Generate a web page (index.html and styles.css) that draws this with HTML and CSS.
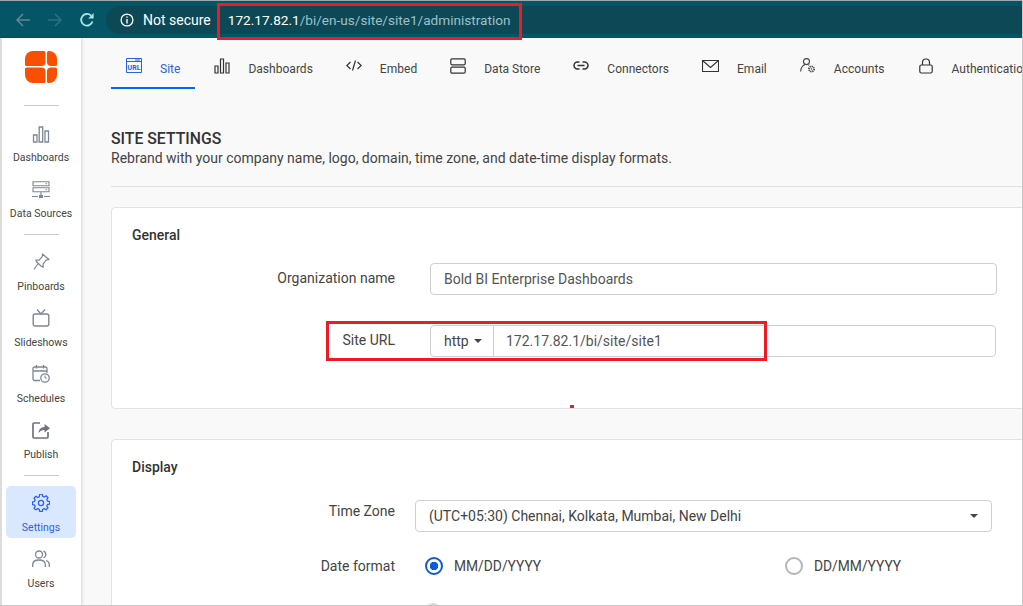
FILE: index.html
```html
<!DOCTYPE html>
<html lang="en">
<head>
  <meta charset="UTF-8">
  <title>Site Settings</title>
  <link rel="stylesheet" href="styles.css">
</head>
<body>
  <!-- Browser toolbar -->
  <div class="browser-bar">
    <svg class="nav-icon" viewBox="0 0 16 16"><path d="M15 8H2M8 2 2 8l6 6" fill="none" stroke="#5f8590" stroke-width="1.6"/></svg>
    <svg class="nav-icon" viewBox="0 0 16 16"><path d="M1 8h13M8 2l6 6-6 6" fill="none" stroke="#2f6f7e" stroke-width="1.6"/></svg>
    <svg class="nav-icon" viewBox="0 0 16 16"><path d="M13.5 9.5A5.8 5.8 0 1 1 12 3.6" fill="none" stroke="#a8e6e4" stroke-width="1.8"/><path d="M14.6 1v5.4H9.2z" fill="#a8e6e4"/></svg>
    <div class="omnibox">
      <svg class="info-icon" viewBox="0 0 14 14"><circle cx="7" cy="7" r="5.9" fill="none" stroke="#fff" stroke-width="1.3"/><path d="M6.3 3.4h1.4v1.4H6.3zM6.3 6h1.4v4.6H6.3z" fill="#fff"/></svg>
      <span class="not-secure">Not secure</span>
      <span class="url-host">172.17.82.1</span><span class="url-path">/bi/en-us/site/site1/administration</span>
    </div>
  </div>

  <div class="app">
    <!-- Left navigation -->
    <nav class="sidebar">
      <svg class="logo" viewBox="0 0 32 32">
        <path d="M8 0h11a1.500 1.500 0 0 1 1.500 1.500V11a4 4 0 0 1-4 4H1.500A1.500 1.500 0 0 1 0 13.500V8a8 8 0 0 1 8-8z" fill="#f94f00"/>
        <path d="M22 1.500A1.500 1.500 0 0 1 23.500 0H24a8 8 0 0 1 8 8v5.500a1.500 1.500 0 0 1-1.500 1.500H26a4 4 0 0 1-4-4z" fill="#f94f00"/>
        <path d="M1.500 16.500h15a4 4 0 0 1 4 4v10a1.500 1.500 0 0 1-1.500 1.500H8a8 8 0 0 1-8-8v-6a1.500 1.500 0 0 1 1.500-1.500z" fill="#f94f00"/>
        <path d="M26 16.500h4.500A1.500 1.500 0 0 1 32 18v6a8 8 0 0 1-8 8h-.5a1.500 1.500 0 0 1-1.500-1.500v-10a4 4 0 0 1 4-4z" fill="#f94f00"/>
      </svg>
      <hr class="side-rule side-rule-first">
      <a class="side-item">
        <svg class="side-icon" viewBox="0 0 18 18"><path d="M1.500 10h3.500v7H1.500zM7.200 2h3.500v15H7.200zM13 6h3.500v11H13z" fill="none" stroke="#7d8794" stroke-width="1.300"/></svg>
        <span>Dashboards</span>
      </a>
      <a class="side-item">
        <svg class="side-icon" viewBox="0 0 18 18"><path d="M1 0.700h16v4H1zM1 6.700h16v4H1zM9 10.700v4.500M0 15.500h6M12 15.500h6" fill="none" stroke="#7d8794" stroke-width="1.100"/><path d="M7 14h4v3H7z" fill="#7d8794"/><path d="M13.500 2.700h1.500M13.500 8.700h1.500" stroke="#7d8794"/></svg>
        <span>Data Sources</span>
      </a>
      <hr class="side-rule side-rule-mid">
      <a class="side-item">
        <svg class="side-icon side-icon-up" viewBox="0 0 18 18"><path d="M10.500 1 17 6.500l-2.800.6-3.200 4 .2 3.200-2-1L4.600 8.800 3.800 7l3.400.2 3-3.500zM5.800 11 2 16.500" fill="none" stroke="#7d8794" stroke-width="1.200" stroke-linejoin="round"/></svg>
        <span>Pinboards</span>
      </a>
      <a class="side-item">
        <svg class="side-icon side-icon-up" viewBox="0 0 18 18"><rect x="1.200" y="5" width="15.600" height="12" rx="2" fill="none" stroke="#7d8794" stroke-width="1.400"/><path d="M5 0.500 9 5l4-4.500" fill="none" stroke="#7d8794" stroke-width="1.300"/></svg>
        <span>Slideshows</span>
      </a>
      <a class="side-item">
        <svg class="side-icon side-icon-up" viewBox="0 0 18 18"><path d="M8 15.500H2.500a1.500 1.500 0 0 1-1.500-1.500V3.500A1.500 1.500 0 0 1 2.500 2h11A1.500 1.500 0 0 1 15 3.500V8M1 6h14M4.500 0v3.500M11.500 0v3.500" fill="none" stroke="#7d8794" stroke-width="1.300"/><circle cx="13" cy="13" r="4.200" fill="none" stroke="#7d8794" stroke-width="1.300"/><path d="M13 10.500V13h1.800" fill="none" stroke="#7d8794"/></svg>
        <span>Schedules</span>
      </a>
      <a class="side-item">
        <svg class="side-icon side-icon-up" viewBox="0 0 18 18"><path d="M8 2H2a1 1 0 0 0-1 1v13a1 1 0 0 0 1 1h13a1 1 0 0 0 1-1v-5" fill="none" stroke="#6f7680" stroke-width="1.700"/><path d="M6.500 12c.3-3.500 2.500-5.800 6-6V3L18 7.200l-5.500 4.300V9c-2.500 0-4.500 1-6 3z" fill="#6f7680"/></svg>
        <span>Publish</span>
      </a>
      <hr class="side-rule side-rule-last">
      <a class="side-item active">
        <svg class="side-icon" viewBox="0 0 18 18"><path d="M7.700.7h2.600l.4 2.100 1.600.7 1.800-1.200 1.900 1.900-1.200 1.800.7 1.600 2.100.4v2.600l-2.100.4-.7 1.600 1.200 1.800-1.900 1.900-1.800-1.200-1.600.7-.4 2.100H7.700l-.4-2.100-1.600-.7-1.800 1.200L2 14.900l1.200-1.800-.7-1.600-2.100-.4V8.500l2.100-.4.7-1.600L2 4.700l1.900-1.900 1.800 1.200 1.600-.7z" transform="translate(0 -.5)" fill="none" stroke="#2f5ff5" stroke-width="1.300" stroke-linejoin="round"/><circle cx="9" cy="9" r="2.600" fill="none" stroke="#2f5ff5" stroke-width="1.300"/></svg>
        <span>Settings</span>
      </a>
      <a class="side-item">
        <svg class="side-icon" viewBox="0 0 18 18"><circle cx="7" cy="4.500" r="3.500" fill="none" stroke="#7d8794" stroke-width="1.300"/><path d="M.7 17v-2.500c0-3 2.300-4.500 6.300-4.500s6.300 1.500 6.300 4.500V17M11.500 1.200a3.500 3.500 0 0 1 0 6.600M14 10.500c2 .6 3.300 2 3.300 4V17" fill="none" stroke="#7d8794" stroke-width="1.300"/></svg>
        <span>Users</span>
      </a>
    </nav>

    <main class="content">
      <!-- Settings tabs -->
      <div class="tabs">
        <a class="tab active">
          <svg class="tab-icon" viewBox="0 0 16 16"><path d="M.5.500h15v14H.5zM.5 3.500h15" fill="none" stroke="#2563eb"/><path d="M9 2h5" stroke="#2563eb"/><text x="8" y="12" class="tab-icon-text">URL</text></svg>
          <span>Site</span>
        </a>
        <a class="tab">
          <svg class="tab-icon" viewBox="0 0 16 16"><path d="M1 8h3v7H1zM6.500 1h3v14h-3zM12 5h3v10h-3z" fill="none" stroke="#333" stroke-width="1.200"/></svg>
          <span>Dashboards</span>
        </a>
        <a class="tab">
          <svg class="tab-icon" viewBox="0 0 16 16"><path d="M4.500 4 .8 7.500l3.700 3.500M11.500 4l3.700 3.500-3.700 3.500M9.500 2.500 6.500 12.500" fill="none" stroke="#333" stroke-width="1.200"/></svg>
          <span>Embed</span>
        </a>
        <a class="tab">
          <svg class="tab-icon" viewBox="0 0 16 16"><rect x=".8" y="0.800" width="14.400" height="6" rx="1.200" fill="none" stroke="#333" stroke-width="1.200"/><rect x=".8" y="9.200" width="14.400" height="6" rx="1.200" fill="none" stroke="#333" stroke-width="1.200"/></svg>
          <span>Data Store</span>
        </a>
        <a class="tab">
          <svg class="tab-icon" viewBox="0 0 16 16"><path d="M6.500 4H4.500a3.500 3.500 0 0 0 0 7h2M9.500 4h2a3.500 3.500 0 0 1 0 7h-2M4.500 7.500h7" fill="none" stroke="#333" stroke-width="1.500"/></svg>
          <span>Connectors</span>
        </a>
        <a class="tab">
          <svg class="tab-icon tab-icon-wide" viewBox="0 0 17 14"><path d="M.5 1.500h16v11H.5zM.5 1.500l8 7 8-7" fill="none" stroke="#333" stroke-width="1.100"/></svg>
          <span>Email</span>
        </a>
        <a class="tab">
          <svg class="tab-icon" viewBox="0 0 16 16"><circle cx="6.500" cy="3.600" r="3" fill="none" stroke="#444" stroke-width="1.100"/><path d="M.6 13.500c.4-3.700 1.800-5.900 4.400-6.900M8.300 6.700l1 .6" fill="none" stroke="#444" stroke-width="1.100"/><circle cx="11.500" cy="11" r="2.600" fill="none" stroke="#444" stroke-width="1.700" stroke-dasharray="1.300 .7"/><circle cx="11.500" cy="11" r=".8" fill="#444"/></svg>
          <span>Accounts</span>
        </a>
        <a class="tab">
          <svg class="tab-icon" viewBox="0 0 16 16"><rect x="1.800" y="7" width="12.400" height="8" rx="1.500" fill="none" stroke="#333" stroke-width="1.200"/><path d="M4.500 7V4.500a3.500 3.500 0 0 1 7 0V7" fill="none" stroke="#333" stroke-width="1.200"/></svg>
          <span>Authentication</span>
        </a>
      </div>

      <div class="page-head">
        <h1>SITE SETTINGS</h1>
        <p>Rebrand with your company name, logo, domain, time zone, and date-time display formats.</p>
      </div>

      <section class="card card-general">
        <h2>General</h2>
        <div class="form-row">
          <label>Organization name</label>
          <div class="field field-text">Bold BI Enterprise Dashboards</div>
        </div>
        <div class="form-row form-row-url">
          <label>Site URL</label>
          <div class="field field-url">
            <div class="protocol">http<i class="caret"></i></div>
            <div class="url-value">172.17.82.1/bi/site/site1</div>
          </div>
        </div>
      </section>

      <section class="card card-display">
        <h2>Display</h2>
        <div class="form-row form-row-zone">
          <label>Time Zone</label>
          <div class="field field-select">(UTC+05:30) Chennai, Kolkata, Mumbai, New Delhi<i class="caret"></i></div>
        </div>
        <div class="form-row form-row-date">
          <label>Date format</label>
          <div class="radio-group">
            <div class="radio-option"><i class="radio checked"></i>MM/DD/YYYY</div>
            <div class="radio-option"><i class="radio"></i>DD/MM/YYYY</div>
          </div>
        </div>
        <i class="radio radio-next"></i>
      </section>
    </main>
  </div>

  <!-- Screenshot frame and red annotation marks -->
  <div class="frame"></div>
  <div class="mark mark-address"></div>
  <div class="mark mark-site-url"></div>
  <div class="mark-dot"></div>
</body>
</html>
```

FILE: styles.css
```css
/* Basic styling */
html, body {
  margin: 0;
  height: 606px;
  overflow: hidden;
}
body {
  position: relative;
  width: 1023px;
  font-family: Roboto, "Liberation Sans", sans-serif;
  background-color: #f9f9f9;
  color: #3c3c3c;
}

/* Browser toolbar */
.browser-bar {
  display: flex;
  align-items: center;
  height: 38px;
  padding-left: 15px;
  box-sizing: border-box;
  background-color: #045566;
  border-top: 1px solid #9aa9ad;
}
.nav-icon {
  width: 16px;
  height: 16px;
  margin-right: 16px;
}
.nav-icon:nth-child(3) {
  margin-right: 11px;
}
.omnibox {
  flex: 1;
  display: flex;
  align-items: center;
  height: 28px;
  padding-left: 14px;
  border-radius: 14px 0 0 14px;
  background-color: #0d4856;
  font-size: 14px;
}
.info-icon {
  width: 14px;
  height: 14px;
  margin-right: 9px;
}
.not-secure {
  color: #fff;
  margin-right: 17px;
}
.url-host {
  color: #fff;
  font-size: 13.600px;
}
.url-path {
  color: #9cc0c8;
  font-size: 13.600px;
}

/* App layout */
.app {
  display: flex;
  height: 568px;
}
.sidebar {
  flex: none;
  display: flex;
  flex-direction: column;
  align-items: center;
  width: 81px;
  box-sizing: border-box;
  padding-top: 13px;
  background-color: #fff;
  border-left: 2px solid #dcdcdc;
  box-shadow: 1px 0 3px rgba(0,0,0,0.15);
}
.logo {
  flex: none;
  width: 32px;
  height: 32px;
  margin-right: 1px;
}
.side-rule {
  flex: none;
  width: 35px;
  height: 1px;
  margin: 5px 0 10px;
  border: 0;
  background-color: #c9c9c9;
}
.side-rule-first {
  margin: 22px 0 11px;
}
.side-rule-mid {
  margin: 5px 0 11px;
}
.side-rule-last {
  margin: 5px 0 10px;
}
.side-item {
  flex: none;
  display: flex;
  flex-direction: column;
  align-items: center;
  width: 70px;
  height: 52px;
  box-sizing: border-box;
  margin-bottom: 4px;
  margin-right: 1px;
  padding-top: 8px;
  border-radius: 5px;
  font-size: 10.500px;
  color: #444;
}
.side-item span {
  margin-top: 8px;
  white-space: nowrap;
}
.side-rule-last ~ .side-item span {
  margin-top: 9px;
}
.side-item.active {
  background-color: #d9e8ff;
  color: #2f5ff5;
}
.side-icon {
  flex: none;
  width: 18px;
  height: 18px;
}
.side-icon-up {
  margin-top: -1px;
  margin-bottom: 1px;
}

/* Main content */
.content {
  flex: 1;
  min-width: 0;
  padding-left: 30px;
  overflow: hidden;
}
.tabs {
  display: flex;
  height: 51px;
  white-space: nowrap;
}
.tab {
  flex: none;
  display: flex;
  align-items: flex-start;
  box-sizing: border-box;
  height: 51px;
  margin-right: 4px;
  padding: 0 14px 0 15px;
  font-size: 12px;
  letter-spacing: 0.02px;
  color: #444;
}
.tab span {
  margin-top: 24px;
  margin-left: 18px;
}
.tab.active {
  padding-right: 15px;
  color: #2563eb;
  border-bottom: 2px solid #0565ff;
}
.tab-icon {
  flex: none;
  width: 16px;
  height: 16px;
  margin-top: 20px;
}
.tab-icon-wide {
  width: 17px;
}
.tab-icon-text {
  font-size: 7px;
  font-weight: 700;
  text-anchor: middle;
  fill: #2563eb;
}
.page-head {
  height: 98px;
  box-sizing: border-box;
  padding-top: 41px;
  border-bottom: 1px solid #e0e0e0;
}
.page-head h1 {
  margin: 0;
  font-size: 15.800px;
  font-weight: 500;
  line-height: 18px;
  color: #333;
}
.page-head p {
  margin: 1px 0 0;
  font-size: 14px;
  line-height: 18px;
  color: #444;
}

/* Cards */
.card {
  position: relative;
  box-sizing: border-box;
  margin-top: 20px;
  padding: 19px 0 0 20px;
  background-color: #fff;
  border: 1px solid #e2e2e2;
  border-radius: 4px 0 0 4px;
}
.card-general {
  height: 202px;
}
.card-display {
  margin-top: 30px;
  height: 167px;
  border-radius: 4px 0 0 0;
}
.card h2 {
  margin: 0;
  font-size: 14px;
  font-weight: 500;
  line-height: 16px;
  color: #333;
}
.form-row {
  display: flex;
  align-items: center;
  margin-top: 20px;
}
.form-row label {
  flex: none;
  width: 263px;
  margin-top: -2px;
  font-size: 14px;
  text-align: right;
  color: #444;
}
.form-row-url {
  margin-top: 30px;
}
.form-row-zone {
  margin-top: 25px;
}
.form-row-zone label {
  margin-top: -10px;
}
.field {
  box-sizing: border-box;
  height: 32px;
  background-color: #fff;
  border: 1px solid #cfcfcf;
  border-radius: 4px;
  font-size: 14px;
  line-height: 30px;
  color: #555;
}
.field-text {
  width: 567px;
  margin-left: 35px;
  padding-left: 13px;
}
.field-url {
  display: flex;
  width: 566px;
  margin-left: 35px;
}
.protocol {
  display: flex;
  align-items: center;
  box-sizing: border-box;
  width: 63px;
  padding-left: 13px;
  border-right: 1px solid #cfcfcf;
  color: #444;
}
.url-value {
  padding-left: 12px;
}
.caret {
  display: inline-block;
  width: 0;
  height: 0;
  border-left: 4px solid transparent;
  border-right: 4px solid transparent;
  border-top: 4px solid #444;
}
.protocol .caret {
  margin-left: 5px;
}
.field-select {
  display: flex;
  align-items: center;
  justify-content: space-between;
  width: 577px;
  margin-left: 20px;
  padding: 0 13px;
  color: #444;
}
.form-row-date {
  margin-top: 25px;
}
.form-row-date label {
  margin-top: 0;
}
.radio-group {
  display: flex;
  margin-left: 30px;
}
.radio-option {
  display: flex;
  align-items: center;
  width: 360px;
  font-size: 13.800px;
  color: #444;
}
.radio {
  flex: none;
  box-sizing: border-box;
  width: 18px;
  height: 18px;
  margin-right: 11px;
  border: 2px solid #b5b5b5;
  border-radius: 50%;
}
.radio.checked {
  border-color: #0b5bd3;
  background: radial-gradient(circle, #0b5bd3 0 4px, #fff 4.500px);
}
.radio-next {
  position: absolute;
  left: 312px;
  top: 163px;
  border-color: #d8d8d8;
}

/* Screenshot frame */
.frame {
  position: absolute;
  left: 0;
  top: 0;
  width: 100%;
  height: 100%;
  box-sizing: border-box;
  border-right: 1px solid #c8c8c8;
  border-bottom: 1px solid #c8c8c8;
}

/* Annotation marks */
.mark {
  position: absolute;
  box-sizing: border-box;
  border: 3px solid #ed1c24;
}
.mark-address {
  left: 217px;
  top: 3px;
  width: 305px;
  height: 37px;
}
.mark-site-url {
  left: 326px;
  top: 321px;
  width: 441px;
  height: 40px;
}
.mark-dot {
  position: absolute;
  left: 570px;
  top: 405px;
  width: 4px;
  height: 3px;
  background-color: #ed1c24;
}
```
